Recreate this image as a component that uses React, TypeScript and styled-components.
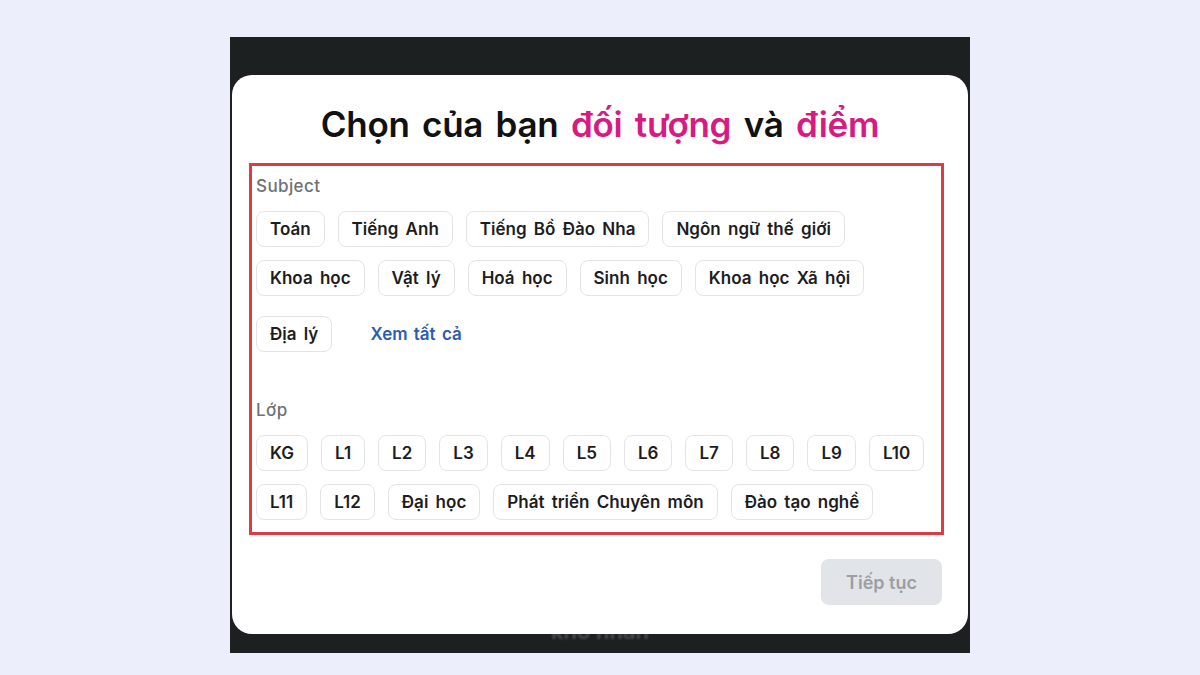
import React from "react";
import styled, { createGlobalStyle } from "styled-components";

const subjects = [
  "Toán",
  "Tiếng Anh",
  "Tiếng Bồ Đào Nha",
  "Ngôn ngữ thế giới",
  "Khoa học",
  "Vật lý",
  "Hoá học",
  "Sinh học",
  "Khoa học Xã hội",
  "Địa lý",
];

const grades = [
  "KG", "L1", "L2", "L3", "L4", "L5", "L6", "L7", "L8", "L9", "L10",
  "L11", "L12", "Đại học", "Phát triển Chuyên môn", "Đào tạo nghề",
];

const GlobalStyle = createGlobalStyle`
  html, body {
    margin: 0;
    padding: 0;
    background: #eceefc;
  }
  * {
    box-sizing: border-box;
  }
`;

const Page = styled.div`
  width: 1200px;
  height: 675px;
  padding-top: 37px;
  display: flex;
  justify-content: center;
  font-family: Inter, "Noto Sans", sans-serif;
`;

const Backdrop = styled.div`
  position: relative;
  width: 740px;
  height: 616px;
  padding-top: 38px;
  background: #1d2021;
  overflow: hidden;
`;

// page content peeking out under the dialog
const BehindText = styled.div`
  position: absolute;
  left: 0;
  right: 0;
  bottom: 8px;
  text-align: center;
  color: #4a4d50;
  font-size: 22px;
  line-height: 27px;
  font-weight: 600;
  filter: blur(1px);
`;

const Modal = styled.div`
  position: relative;
  width: 736px;
  height: 559px;
  margin: 0 auto;
  padding-top: 29px;
  background: #ffffff;
  border-radius: 20px;
  display: flex;
  flex-direction: column;
`;

const Title = styled.h1`
  margin: 0;
  text-align: center;
  font-size: 35px;
  line-height: 40px;
  font-weight: 600;
  color: #111111;
  letter-spacing: -0.3px;
  word-spacing: 4px;
`;

const Accent = styled.span`
  color: #d81b80;
`;

const Section = styled.div`
  margin: 19px 24px 0 17px;
  padding: 10px 4px 12px 4px;
  border: 3px solid #dc3d45;
`;

const Label = styled.div<{ $gap?: number }>`
  margin-top: ${(p) => p.$gap ?? 0}px;
  font-size: 17px;
  line-height: 20px;
  font-weight: 500;
  letter-spacing: 0.4px;
  color: #6d7176;
`;

const ChipWrap = styled.div`
  margin-top: 15px;
  display: flex;
  flex-wrap: wrap;
  align-items: center;
  column-gap: 13px;
  row-gap: 13px;
`;

const Chip = styled.button`
  height: 36px;
  padding: 0 13px;
  border: 1px solid #e4e4e6;
  border-radius: 8px;
  background: #ffffff;
  font-family: inherit;
  font-size: 17px;
  font-weight: 600;
  word-spacing: 3px;
  color: #1d1d1f;
  cursor: pointer;
`;

const SeeAll = styled.button`
  height: 50px;
  padding: 0 25px;
  border: none;
  background: none;
  font-family: inherit;
  font-size: 17px;
  font-weight: 600;
  word-spacing: 2px;
  color: #2b5cb0;
  cursor: pointer;
`;

const Footer = styled.div`
  margin-top: 24px;
  padding-right: 26px;
  display: flex;
  justify-content: flex-end;
`;

const NextButton = styled.button`
  width: 121px;
  height: 46px;
  border: none;
  border-radius: 8px;
  background: #e1e4e8;
  font-family: inherit;
  font-size: 18px;
  font-weight: 600;
  color: #9b9ea3;
`;

export default function App() {
  return (
    <Page>
      <GlobalStyle />
      <Backdrop>
        <BehindText>khó nhăn</BehindText>
        <Modal>
          <Title>
            Chọn của bạn <Accent>đối tượng</Accent> và <Accent>điểm</Accent>
          </Title>
          <Section>
            <Label>Subject</Label>
            <ChipWrap>
              {subjects.map((s) => (
                <Chip key={s}>{s}</Chip>
              ))}
              <SeeAll>Xem tất cả</SeeAll>
            </ChipWrap>
            <Label $gap={41}>Lớp</Label>
            <ChipWrap>
              {grades.map((g) => (
                <Chip key={g}>{g}</Chip>
              ))}
            </ChipWrap>
          </Section>
          <Footer>
            <NextButton disabled>Tiếp tục</NextButton>
          </Footer>
        </Modal>
      </Backdrop>
    </Page>
  );
}
